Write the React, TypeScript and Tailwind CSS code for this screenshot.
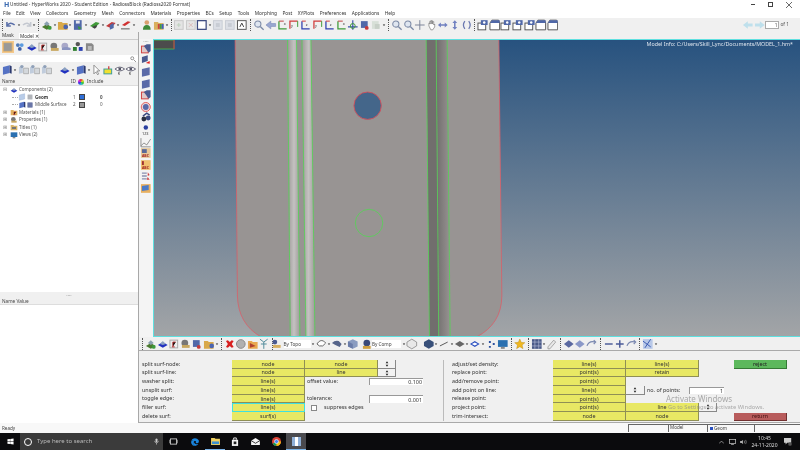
import React from "react";
import { FaWindows, FaEdge } from "react-icons/fa";

const F = "font-['Noto_Sans','Open_Sans',sans-serif]";

function Ico({ k, small, tiny }: { k: string; small?: boolean; tiny?: boolean }) {
  const body: Record<string, React.ReactNode> = {
    undo: <path d="M2 7 Q5 2 10 6 M2 3v4h4" fill="none" stroke="#5a6fa8" strokeWidth="1.6" />,
    redo: <path d="M10 7 Q7 2 2 6 M10 3v4H6" fill="none" stroke="#c4c8d0" strokeWidth="1.6" />,
    compadd: <g><path d="M1 8l5-3 5 3-5 3z" fill="#4b7a2e" /><path d="M3 5l3-3 3 3-3 2z" fill="#8aa0b0" /><circle cx="9" cy="9" r="2" fill="#3c9a3c" /></g>,
    folder: <g><path d="M1 3h4l1 1h5v7H1z" fill="#d9a94a" /><circle cx="9" cy="8" r="2.4" fill="#4b65b0" /></g>,
    save: <g><rect x="2" y="1" width="8" height="10" fill="#5068a8" /><rect x="4" y="1.5" width="4" height="3" fill="#e8e8f0" /><path d="M6 7l4 2-3 2z" fill="#3c9a3c" /></g>,
    gflag: <g><path d="M1 7l6-4 4 1-5 5z" fill="#3f9a38" /><path d="M3 8l3 2 2-2v-2z" fill="#444" /></g>,
    rflag: <g><path d="M1 7l6-4 4 1-5 5z" fill="#c43a3a" /><path d="M5 6l4-2v5l-4 2z" fill="#5068a8" /></g>,
    rline: <g><path d="M2 6l6-4 3 1-6 4z" fill="#d03030" /><path d="M1 10h9" stroke="#555" strokeWidth="1" /></g>,
    person: <g><circle cx="6" cy="3.4" r="2.4" fill="#d9a070" /><path d="M2 11q0-5 4-5t4 5z" fill="#3f8a3a" /></g>,
    color: <g><path d="M1 3h4l1 1h5v7H1z" fill="#d9b060" /><rect x="5" y="5" width="2" height="5" fill="#d04040" /><rect x="7" y="5" width="2" height="5" fill="#40a040" /><rect x="9" y="5" width="2" height="5" fill="#4060c0" /></g>,
    gbox: <g><rect x="1.5" y="1.5" width="9" height="9" fill="#e4e4e4" stroke="#c8c8c8" /><path d="M4 6h4M6 4v4" stroke="#bcd0bc" /></g>,
    rbox: <g><rect x="1.5" y="1.5" width="9" height="9" fill="#e4e4e4" stroke="#c8c8c8" /><path d="M4 4l4 4M8 4l-4 4" stroke="#dcbcbc" /></g>,
    wbox: <rect x="1.5" y="1.5" width="9" height="9" fill="#fff" stroke="#3c4a80" strokeWidth="1.3" />,
    gfit: <g><rect x="1.5" y="1.5" width="9" height="9" fill="#dcdfe6" stroke="#c8ccd4" /><rect x="4" y="4" width="4" height="4" fill="#c8ccd4" /></g>,
    disk: <g><rect x="1.5" y="1.5" width="9" height="9" fill="#fff" stroke="#555" /><path d="M4 8l2-4 2 4" stroke="#444" fill="none" /></g>,
    mag: <g><circle cx="5" cy="5" r="3.2" fill="#dfe6f0" stroke="#7c8aa6" strokeWidth="1.1" /><path d="M7.5 7.5L11 11" stroke="#7c8aa6" strokeWidth="1.4" /></g>,
    diamond: <path d="M1 6l5-4v2.5h5v3H6V10z" fill="#9aa8d0" stroke="#6a7ab0" strokeWidth=".5" />,
    axg: <g><path d="M2 2v8h8" fill="none" stroke="#3f9a38" strokeWidth="1.3" /><path d="M2 2h5" stroke="#c04040" strokeWidth="1" /><text x="7" y="6" fontSize="4" fill="#333">x</text></g>,
    axr: <g><path d="M2 10V2h8" fill="none" stroke="#d03a3a" strokeWidth="1.3" /><path d="M10 2v6" stroke="#3f9a38" strokeWidth="1" /><text x="3" y="8" fontSize="4" fill="#333">y</text></g>,
    axb: <g><path d="M2 2v8h8" fill="none" stroke="#3040b0" strokeWidth="1.3" /><path d="M2 2h4" stroke="#d03a3a" strokeWidth="1" /><text x="6" y="7" fontSize="4" fill="#333">z</text></g>,
    axm: <g><path d="M6 1v10M1 8h10" stroke="#3a50a8" strokeWidth="1.2" /><circle cx="6" cy="7" r="2.5" fill="none" stroke="#3f9a38" /></g>,
    fitr: <g><rect x="2" y="2" width="7" height="7" fill="#5068a8" /><circle cx="8" cy="9" r="2" fill="#c43a3a" /></g>,
    gpage: <g><rect x="2" y="2" width="7" height="8" fill="#d8e0d8" /><rect x="5" y="5" width="5" height="5" fill="#c8d0c8" /></g>,
    cross: <path d="M6 1v10M1 6h10" stroke="#7a8498" strokeWidth="1" />,
    hand: <path d="M3 7V4h1v1V2h1.300v3V1.500h1.300V5V2.500H8V6l1-1v3l-2 3H5z" fill="#fff" stroke="#777" strokeWidth=".7" />,
    lr: <path d="M1 6l3-2.500v1.700h4V3.500L11 6 8 8.500V6.800H4v1.700z" fill="#7080c0" />,
    ud: <path d="M6 1l2.500 3H6.800v4h1.700L6 11 3.500 8h1.700V4H3.500z" fill="#7080c0" />,
    rot: <path d="M4 2Q1 6 4 10M8 2Q11 6 8 10" fill="none" stroke="#6a78b0" strokeWidth="1.300" />,
    view: <g><rect x="1" y="4" width="8" height="7" fill="#fff" stroke="#555" /><rect x="4" y="1" width="7" height="5" fill="#5068a8" /><circle cx="7.500" cy="3.500" r="1.300" fill="#fff" /></g>,
    view2: <g><path d="M1 4l2-3h7l1 3v7H1z" fill="#fff" stroke="#555" /><path d="M1 4h10V1H3z" fill="#5068a8" /></g>,
    la: <path d="M1 6l5-4v2.500h5v3H6V10z" fill="#bfe0ec" />,
    ra: <path d="M11 6L6 2v2.500H1v3h5V10z" fill="#bfe0ec" />,
    models: <g><rect x="1" y="1" width="10" height="10" rx="1" fill="#d8b070" /><rect x="2" y="2" width="8" height="8" fill="#999" /></g>,
    ent: <g><circle cx="4" cy="4" r="2" fill="#4f7ab8" /><circle cx="8" cy="4" r="2" fill="#5a9adf" /><circle cx="6" cy="8" r="2" fill="#4060a8" /></g>,
    comp: <g><path d="M1 7l5-3 5 3-5 3z" fill="#2030c0" /><path d="M3 6l3-3 3 3-3 1z" fill="#8aa0c0" /></g>,
    mat: <g><rect x="2" y="2" width="8" height="8" fill="#eee" stroke="#aaa" /><path d="M5 9V4h3M7 9H4" stroke="#c03a3a" /></g>,
    prop: <g><circle cx="5" cy="5" r="3.500" fill="#777" /><rect x="2" y="7" width="8" height="3" fill="#c8a860" /></g>,
    titl: <g><circle cx="5" cy="5" r="3.500" fill="#a8a8c8" /><path d="M2 7q4-2 9 0v2H2z" fill="#8a94c0" /></g>,
    mix: <g><circle cx="6" cy="3" r="2.300" fill="#555" /><rect x="1" y="6" width="4" height="4" fill="#2f7f2f" /><rect x="7" y="6" width="4" height="4" fill="#2a40b0" /></g>,
    layers: <g><path d="M2 2h6l2 2v6H2z" fill="#888" /><path d="M4 5h4v4H4z" fill="#bbb" /></g>,
    folderm: <g><path d="M1 3h4l1 1h5v7H1z" fill="#e0b060" /><path d="M6 10V6h3M8 10H5" stroke="#b03030" /></g>,
    foldert: <g><path d="M1 3h4l1 1h5v7H1z" fill="#d8b468" /><rect x="3" y="6" width="6" height="3" fill="#777" /></g>,
    sheet: <g><path d="M2 3l7-2v8l-7 2z" fill="#5572c4" /><path d="M9 1l2 1v8l-2-1z" fill="#2c3a70" /></g>,
    sheetl: <path d="M2 3l8-2v8l-8 2z" fill="#b8cce8" stroke="#8aa0c8" strokeWidth=".5" />,
    gridg: <g><rect x="1" y="1" width="10" height="10" fill="#c8ccd4" /><path d="M4 1v10M8 1v10M1 4h10M1 8h10" stroke="#888" strokeWidth=".8" /></g>,
    gridb: <g><rect x="1" y="1" width="10" height="10" fill="#3a4a88" /><path d="M4 1v10M8 1v10M1 4h10M1 8h10" stroke="#c0c8e0" strokeWidth=".8" /></g>,
    sheetg: <g><path d="M1 3l4-1v7l-4 1z" fill="#c0ccdc" /><circle cx="4" cy="2.500" r="1.800" fill="#8fa0b8" /><rect x="6" y="4" width="5" height="6" fill="#d4d8dc" stroke="#888" strokeWidth=".5" /></g>,
    arrow: <path d="M3 1v9l2-2 2 3 1-1-2-3h3z" fill="#fff" stroke="#666" strokeWidth=".7" />,
    yel: <g><rect x="2" y="5" width="8" height="5" fill="#f0e030" stroke="#3a9a9a" /><path d="M7 5V2" stroke="#d03a3a" strokeWidth="1.300" /></g>,
    eye: <g><path d="M1 5q5-4 10 0-5 4-10 0z" fill="#fff" stroke="#667" /><circle cx="6" cy="5" r="1.500" fill="#556" /><text x="4" y="11.500" fontSize="3.500" fill="#333">R</text></g>,
    sbox: <g><rect x="1.500" y="3" width="7" height="7" fill="#e0c8c8" stroke="#d04040" /><path d="M4 3l3-2h4v7l-2 2z" fill="#4a5a90" /></g>,
    sred: <g><path d="M2 3l6-2v6l-6 2z" fill="#4a5a90" /><path d="M6 9l4-2v3z" fill="#e02020" /></g>,
    sblue: <path d="M2 3l8-2v8l-8 2z" fill="#5a6aa8" />,
    circ: <g><circle cx="6" cy="6" r="4.700" fill="#f0d8d8" stroke="#e06060" /><circle cx="6" cy="6" r="3" fill="#5a6aa8" /></g>,
    bino: <g><circle cx="4" cy="7" r="2.500" fill="#2a3040" /><circle cx="8.500" cy="6" r="2.500" fill="#3a4a80" /><path d="M3 4l4-3 3 2" stroke="#3a4a80" strokeWidth="1.500" fill="none" /></g>,
    num: <g><circle cx="6" cy="3.500" r="2.300" fill="#2a40a0" /><text x="2" y="11" fontSize="4" fill="#333">123</text></g>,
    chart: <path d="M1 10l3-3 3 2 4-6M1 2v9h10" fill="none" stroke="#777" strokeWidth=".8" />,
    abc: <g><rect x="1" y="1" width="10" height="10" fill="#e8c898" /><rect x="2" y="2" width="5" height="4" fill="#5a6a98" /><text x="2" y="10" fontSize="3.600" fontWeight="700" fill="#a02020">ABC</text></g>,
    abc2: <g><rect x="1" y="1" width="10" height="10" fill="#f0c070" /><rect x="2" y="2" width="2" height="4" fill="#a03030" /><text x="2" y="10" fontSize="3.600" fontWeight="700" fill="#a02020">ABC</text></g>,
    mv: <g><path d="M2 3h5M2 6h5M2 9h5" stroke="#8a90b0" strokeWidth="1.300" /><path d="M8 2l2 3-2 1zM8 7l2 3H7z" fill="#d04040" /></g>,
    org: <g><rect x="1" y="2" width="10" height="9" fill="#e8b060" /><path d="M2 9l7-1V3L2 4z" fill="#4a7ac8" /></g>,
    red: <path d="M2 3l2-1 2 2 2-2 2 1-2 3 2 3-2 1-2-2-2 2-2-1 2-3z" fill="#d82020" />,
    sph: <circle cx="6" cy="6" r="4.500" fill="#b0b0b0" stroke="#888" />,
    fold2: <g><path d="M1 3h4l1 1h5v7H1z" fill="#e8a850" /><path d="M3 5l6 3-6 2z" fill="#b04030" /></g>,
    ant: <path d="M6 11V4M2 1l4 3 4-3M3 6h6" stroke="#4f8a9a" fill="none" strokeWidth="1" />,
    topo: <g><circle cx="4" cy="4" r="2.500" fill="#4a5a90" /><rect x="2" y="7" width="8" height="3" fill="#d8b060" /></g>,
    ring: <path d="M1 6q3-5 7-3l2 2-3 3Q3 9 1 6z" fill="#fff" stroke="#666" />,
    ell: <path d="M1 5q3-3 7-2l3 3-2 3Q4 7 1 5z" fill="#55648a" />,
    cube: <g><path d="M6 1l5 2.500v5L6 11 1 8.500v-5z" fill="#8a9cc0" /><path d="M6 6v5L1 8.500v-5z" fill="#6a7ca8" /></g>,
    comps: <g><circle cx="6" cy="5" r="3.500" fill="#3a4a7a" /><rect x="2" y="8" width="8" height="3" fill="#d0a040" /></g>,
    cubew: <path d="M6 1l5 3v4l-5 3-5-3V4z" fill="#e8e8e8" stroke="#777" strokeWidth=".7" />,
    cubed: <path d="M6 1l5 3v4l-5 3-5-3V4z" fill="#38507a" />,
    line: <path d="M2 8l8-4" stroke="#555" strokeWidth="1" />,
    dia: <path d="M1 6l5-3 5 3-5 3z" fill="#666" />,
    dias: <g><path d="M1 6l5-3 5 3-5 3z" fill="#2a50c0" /><path d="M3 6l3-1.500L9 6 6 7.500z" fill="#fff" /></g>,
    dots: <path d="M3 3h2v2H3zM7 5h2v2H7zM3 8h2v2H3z" fill="#2a50a0" />,
    mon: <g><rect x="1" y="2" width="10" height="7" fill="#2a70b0" /><rect x="4" y="9" width="4" height="2" fill="#888" /></g>,
    star: <path d="M6 .8l1.500 3.500 3.800.3-2.900 2.500.9 3.700L6 8.800 2.700 10.800l.9-3.700L.7 4.600l3.800-.3z" fill="#f0b820" stroke="#b08010" strokeWidth=".4" />,
    grid: <g><rect x="1" y="1" width="10" height="10" fill="#4a5a88" /><path d="M4 1v10M8 1v10M1 4h10M1 8h10" stroke="#c0c8e0" strokeWidth=".6" /></g>,
    pen: <path d="M2 9l6-7 2 2-6 7H2z" fill="#e8e8e8" stroke="#888" strokeWidth=".7" />,
    dl: <path d="M6 2L1 6l5 4 5-4z" fill="#5a68a0" />,
    dr: <path d="M6 2l5 4-5 4-5-4z" fill="#8a98c8" />,
    curv: <path d="M1 8Q3 2 10 4M8 2l2 2-2 2" fill="none" stroke="#7a88b0" strokeWidth="1.200" />,
    minus: <path d="M2 6h8" stroke="#4a5a98" strokeWidth="1.500" />,
    plus: <path d="M2 6h8M6 2v8" stroke="#4a5a98" strokeWidth="1.500" />,
    net: <g><rect x="1" y="1" width="10" height="10" fill="#b8c8e8" /><path d="M1 3l8 6M9 1L3 10" stroke="#3a5ab0" strokeWidth="1" /></g>,
  };
  const size = tiny ? "w-[6px] h-[6px]" : small ? "w-[8px] h-[8px]" : "w-[11.600px] h-[12px]";
  return (
    <svg viewBox="0 0 12 12" className={`${size} shrink-0`}>
      {body[k]}
    </svg>
  );
}

const Caret = () => (
  <svg viewBox="0 0 4 12" className="w-[4px] h-[12px] shrink-0"><path d="M.8 5.500h2.400L2 7z" fill="#222" /></svg>
);
const Sep = () => (
  <div className="w-[5px] h-[12px] shrink-0 flex justify-center">
    <div className="w-px h-full border-l border-dotted border-[#555]" />
  </div>
);

const spacer: Record<string, string> = {
  "1": "w-[1px] shrink-0",
  "3": "w-[3px] shrink-0",
  "5": "w-[5px] shrink-0",
  "7": "w-[7px] shrink-0",
  "-1": "-ml-[1px]",
  "-4": "-ml-[4px]",
};

function Tools({ items }: { items: string[] }) {
  return (
    <>
      {items.map((s, i) =>
        s === "|" ? <Sep key={i} /> : s === "v" ? <Caret key={i} /> : spacer[s] ? <div key={i} className={spacer[s]} /> : <Ico key={i} k={s} />
      )}
    </>
  );
}

const Btn = ({ t, hi }: { t: string; hi?: boolean }) => (
  <div className={`w-[73px] h-full shrink-0 bg-[#e8e864] border-r border-b border-[#8f8f55] flex items-center justify-center text-[5.400px] text-[#333] ${hi ? "outline outline-1 -outline-offset-1 outline-[#40e0e0]" : ""}`}>{t}</div>
);
const Spin = ({ w = "w-[18px]" }: { w?: string }) => (
  <div className={`${w} h-full shrink-0 bg-[#f2f2f2] border-r border-b border-[#888] flex items-center justify-center`}>
    <svg viewBox="0 0 6 8" className="w-[4px] h-[6px]"><path d="M3 0l2 3H1zM3 8L1 5h4z" fill="#222" /></svg>
  </div>
);
const Lbl = ({ t, w }: { t: string; w: string }) => <div className={`${w} shrink-0 text-[5.400px] text-[#333] whitespace-nowrap leading-none`}>{t}</div>;
const Input = ({ v, w }: { v: string; w: string }) => (
  <div className={`${w} h-[7.500px] shrink-0 bg-white border-t border-l border-[#999] flex items-center justify-end pr-[1px] text-[5.400px] text-[#333]`}>{v}</div>
);
const Row = ({ children }: { children: React.ReactNode }) => <div className="h-[8.700px] flex items-center">{children}</div>;

function Viewport() {
  return (
    <svg viewBox="0 0 646 298" className="w-full h-full block" preserveAspectRatio="none">
      <defs>
        <linearGradient id="bgv" x1="0" y1="0" x2="0" y2="1">
          <stop offset="0" stopColor="#27527f" />
          <stop offset="1" stopColor="#a3a5a7" />
        </linearGradient>
        <linearGradient id="bar" x1="0" y1="0" x2="1" y2="0">
          <stop offset="0" stopColor="#a09c9b" />
          <stop offset=".5" stopColor="#c4c2c1" />
          <stop offset="1" stopColor="#a09c9b" />
        </linearGradient>
        <linearGradient id="shade" x1="0" y1="0" x2="1" y2="0">
          <stop offset="0" stopColor="#716e6d" />
          <stop offset="1" stopColor="#989493" />
        </linearGradient>
      </defs>
      <rect width="646" height="298" fill="url(#bgv)" />
      <path d="M82 0L84.300 257Q85 285 108 298H323Q348 285 348.300 257L345.300 0Z" fill="#989493" />
      <path d="M82 0L84.300 257Q85 285 108 298M323 298Q348 285 348.300 257L345.300 0" fill="none" stroke="#d8606a" strokeWidth=".8" />
      <path d="M135 0h8.500l3 298H137.500Z" fill="url(#bar)" />
      <path d="M149 0h8.500l4 298h-8.700Z" fill="url(#bar)" />
      <path d="M273 0h10l2.300 298H276Z" fill="#716e6d" />
      <path d="M283 0h11l3 298H285.300Z" fill="url(#shade)" />
      <g stroke="#54d454" strokeWidth=".8" fill="none">
        <path d="M134.300 0L137 298M143.300 0L146.700 298M148.700 0L152.700 298M157.700 0L161.700 298M272.700 0L276 298M282.700 0L285.300 298M293.700 0L296.700 298" />
        <circle cx="215.700" cy="184" r="13.700" />
      </g>
      <circle cx="214.300" cy="66.700" r="13.700" fill="#44668a" stroke="#d8505a" strokeWidth=".9" />
      <rect x="0" y="1" width="21" height="9" fill="#4c4c4c" stroke="#4cc04c" strokeWidth=".8" />
      <path d="M21 1v9" stroke="#d03040" strokeWidth="1" />
      <path d="M0 .5H646M0 297.500H646M.5 0V298" stroke="#5fe0e0" strokeWidth="1" />
    </svg>
  );
}

const tree = "h-[7.500px] flex items-center text-[4.500px] text-[#555] whitespace-nowrap";

function Top({ k, t, sign }: { k: string; t: string; sign: string }) {
  return (
    <div className={tree}>
      <span className="w-[7px] text-[5px] text-[#888] leading-none">{sign}</span>
      <Ico k={k} small />
      <span className="ml-[1px]">{t}</span>
    </div>
  );
}
function Child({ k1, k2, t, id, sw, bold }: { k1: string; k2: string; t: string; id: string; sw: string; bold?: boolean }) {
  return (
    <div className={tree}>
      <div className="ml-[9px] w-[6px] border-t border-dotted border-[#aaa]" />
      <Ico k={k1} small />
      <div className="w-[1px]" />
      <Ico k={k2} tiny />
      <span className={`ml-[2px] w-[38px] ${bold ? "font-bold text-[#333]" : ""}`}>{t}</span>
      <span className="w-[6px]">{id}</span>
      <div className={`w-[6px] h-[6px] border border-[#444] ${sw}`} />
      <span className={`ml-[15px] ${bold ? "font-bold" : ""}`}>0</span>
    </div>
  );
}

export default function App() {
  return (
    <div className={`w-[800px] h-[450px] overflow-hidden flex flex-col bg-[#f0f0f0] ${F} relative blur-[0.3px]`}>
      <div className="h-[9px] bg-white flex items-center pl-[4px] shrink-0">
        <span className="text-[7px] font-bold text-[#3a6ab0] leading-none w-[6px]">H</span>
        <span className="text-[4.700px] text-[#333] leading-none whitespace-nowrap">Untitled - HyperWorks 2020 - Student Edition - RadiossBlock (Radioss2020 Format)</span>
        <div className="ml-auto flex items-center pr-[8px] gap-[13px]">
          <div className="w-[4px] h-px bg-[#444]" />
          <div className="w-[5px] h-[5px] border border-[#444]" />
          <svg viewBox="0 0 6 6" className="w-[6px] h-[6px]"><path d="M0 0l6 6M6 0L0 6" stroke="#444" strokeWidth=".8" /></svg>
        </div>
      </div>
      <div className="h-[9px] bg-white flex items-center pl-[3px] gap-[5.400px] text-[4.800px] text-[#333] shrink-0 leading-none">
        {["File","Edit","View","Collectors","Geometry","Mesh","Connectors","Materials","Properties","BCs","Setup","Tools","Morphing","Post","XYPlots","Preferences","Applications","Help"].map((m) => (
          <span key={m}>{m}</span>
        ))}
      </div>
      <div className="h-[14px] flex items-center shrink-0">
        <Tools items={["|","undo","v","redo","v","|","compadd","v","folder","v","save","v","1","gflag","v","rflag","v","rline","v","5","person","1","color","v","|","-1","gbox","rbox","wbox","v","gfit","1","gfit","disk","|","mag","1","diamond","axg","axr","axb","1","axr","axb","axg","axm","fitr","gpage","v","|","mag","mag","cross","hand","lr","ud","rot","|","view","view2","view","view","view","view2","view2"]} />
        <div className="ml-auto flex items-center pr-[11px] text-[4.800px] text-[#555]">
          <Ico k="la" /><Ico k="ra" />
          <div className="w-[14px] h-[8px] bg-white border border-[#aaa] flex items-center justify-end pr-px leading-none">1</div>
          <span className="ml-[1px] whitespace-nowrap">of 1</span>
        </div>
      </div>
      <div className="flex-1 flex min-h-0">
        <div className="w-[139px] shrink-0 flex flex-col border-r border-[#a8a8a8]">
          <div className="h-[7px] flex items-end text-[4.700px] text-[#333] leading-none shrink-0">
            <span className="w-[19px] pl-[2px] pb-[1px]">Mask</span>
            <span className="w-[19px] h-[6px] bg-white pl-[1px] flex items-center whitespace-nowrap">Model ✕</span>
          </div>
          <div className="h-[14px] flex items-center pl-[2px] shrink-0 border-t border-[#ccc]">
            <div className="w-[12px] h-[12px] bg-[#f4c88c] flex items-center justify-center shrink-0"><Ico k="models" /></div>
            <Tools items={["ent","comp","mat","prop","titl","mix","layers"]} />
          </div>
          <div className="h-[2px] shrink-0" />
          <div className="h-[7px] bg-white flex items-center justify-end pr-[2px] shrink-0">
            <svg viewBox="0 0 8 8" className="w-[6px] h-[6px]"><circle cx="3" cy="3" r="2" fill="none" stroke="#777" /><path d="M5 5l3 3" stroke="#777" /></svg>
          </div>
          <div className="h-[16px] flex items-center pl-[1px] shrink-0">
            <Tools items={["sheet","v","1","sheetg","sheetg","sheetg","7","comp","v","sheet","v","arrow","yel","eye","eye"]} />
          </div>
          <div className="h-[8px] flex items-center text-[4.700px] text-[#444] border-b border-[#ddd] shrink-0 leading-none">
            <span className="ml-[2px] w-[69px]">Name</span>
            <span className="w-[5px] mr-[2px]">ID</span>
            <div className="w-[6px] h-[6px] rounded-full bg-[conic-gradient(#e03030,#e0e030,#30c030,#30c0e0,#3030e0,#e030e0,#e03030)]" />
            <span className="ml-[3px]">Include</span>
          </div>
          <div className="h-[206px] bg-white shrink-0 pl-[3px]">
            <Top k="comp" t="Components (2)" sign="⊟" />
            <Child k1="sheetl" k2="gridg" t="Geom" id="1" sw="bg-[#2f6fd8]" bold />
            <Child k1="sheet" k2="gridb" t="Middle Surface" id="2" sw="bg-[#999]" />
            <Top k="folderm" t="Materials (1)" sign="⊞" />
            <Top k="prop" t="Properties (1)" sign="⊞" />
            <Top k="foldert" t="Titles (1)" sign="⊞" />
            <Top k="mon" t="Views (2)" sign="⊞" />
          </div>
          <div className="h-[7px] flex items-center justify-center shrink-0 text-[5px] text-[#666] leading-none">····</div>
          <div className="h-[6px] flex items-center text-[4.700px] text-[#444] pl-[2px] border-b border-[#ddd] shrink-0 leading-none">Name Value</div>
          <div className="flex-1 bg-white" />
        </div>
        <div className="flex-1 flex flex-col min-w-0">
          <div className="h-[298px] flex shrink-0 mt-[7px]">
            <div className="w-[14px] shrink-0 flex flex-col items-center bg-[#f4f4f4]">
              <div className="h-[4px] text-[5px] leading-none text-[#666]">····</div>
              {["sbox","sred","sblue","sblue","sbox","circ","bino","num","chart","abc","abc2","mv","org"].map((k, i) => (
                <div key={i} className="h-[11.600px] flex items-center shrink-0"><Ico k={k} /></div>
              ))}
            </div>
            <div className="flex-1 relative">
              <Viewport />
              <div className="absolute top-[1px] right-[7px] text-[5.350px] text-[#dfe6ee] leading-[8px] whitespace-nowrap">Model Info: C:/Users/Skill_Lync/Documents/MODEL_1.hm*</div>
            </div>
          </div>
          <div className="h-[14px] flex items-center pl-[1px] shrink-0 border-b border-[#aaa]">
            <Tools items={["|","compadd","comp","mat","prop","fitr","folder","v","|","red","sph","fold2","ant","|","-4","topo"]} />
            <span className="text-[4.700px] text-[#444] w-[27px] ml-[1px] whitespace-nowrap bg-white leading-[8px] h-[8px]">By Topo</span>
            <Caret />
            <Tools items={["1","ring","v","ell","v","cube","3","comps"]} />
            <span className="text-[4.700px] text-[#444] w-[29px] -ml-[1px] whitespace-nowrap bg-white leading-[8px] h-[8px]">By Comp</span>
            <Tools items={["1","v","cubew","5","cubed","v","line","v","dia","v","dias","v","1","dots","mon","|","star","|","grid","v","pen","|","dl","dr","curv","|","minus","plus","curv","|","net","v"]} />
          </div>
          <div className="flex-1 flex pl-[3px] pt-[9px] border-b border-[#aaa] min-h-0">
            <div className="flex flex-col w-[301px] shrink-0 h-[61px]">
              <Row><Lbl t="split surf-node:" w="w-[90px]" /><Btn t="node" /><Btn t="node" /><Spin /></Row>
              <Row><Lbl t="split surf-line:" w="w-[90px]" /><Btn t="node" /><Btn t="line" /><Spin /></Row>
              <Row><Lbl t="washer split:" w="w-[90px]" /><Btn t="line(s)" /><Lbl t="offset value:" w="w-[64px] pl-[2px]" /><Input v="0.100" w="w-[54px]" /></Row>
              <Row><Lbl t="unsplit surf:" w="w-[90px]" /><Btn t="line(s)" /></Row>
              <Row><Lbl t="toggle edge:" w="w-[90px]" /><Btn t="line(s)" /><Lbl t="tolerance:" w="w-[64px] pl-[2px]" /><Input v="0.001" w="w-[54px]" /></Row>
              <Row><Lbl t="filler surf:" w="w-[90px]" /><Btn t="line(s)" hi /><div className="ml-[6px] w-[6px] h-[6px] bg-white border border-[#888]" /><Lbl t="suppress edges" w="ml-[7px] w-[60px]" /></Row>
              <Row><Lbl t="delete surf:" w="w-[90px]" /><Btn t="surf(s)" /></Row>
            </div>
            <div className="flex flex-col pl-[8px] relative flex-1 h-[61px] border-l border-[#bbb]">
              <Row><Lbl t="adjust/set density:" w="w-[101px]" /><Btn t="line(s)" /><Btn t="line(s)" /></Row>
              <Row><Lbl t="replace point:" w="w-[101px]" /><Btn t="point(s)" /><Btn t="retain" /></Row>
              <Row><Lbl t="add/remove point:" w="w-[101px]" /><Btn t="point(s)" /></Row>
              <Row><Lbl t="add point on line:" w="w-[101px]" /><Btn t="line(s)" /><Spin w="w-[19px]" /><Lbl t="no. of points:" w="w-[44px] pl-[2px]" /><Input v="1" w="w-[35px]" /></Row>
              <Row><Lbl t="release point:" w="w-[101px]" /><Btn t="point(s)" /></Row>
              <Row><Lbl t="project point:" w="w-[101px]" /><Btn t="point(s)" /><Btn t="line" /><Spin /></Row>
              <Row><Lbl t="trim-intersect:" w="w-[101px]" /><Btn t="node" /><Btn t="node" /></Row>
              <div className="absolute left-[290px] top-0 w-[53px] h-[9px] bg-[#5cb85c] border-r border-b border-[#357a35] flex items-center justify-center text-[5.400px] text-[#222]">reject</div>
              <div className="absolute left-[290px] top-[53px] w-[53px] h-[8px] bg-[#b85c5c] border-r border-b border-[#703030] flex items-center justify-center text-[5.400px] text-[#401010]">return</div>
              <div className="absolute left-[222px] top-[35px] text-[8px] text-[#8a8a8a]/70 whitespace-nowrap leading-none">Activate Windows</div>
              <div className="absolute left-[224px] top-[45px] text-[5.800px] text-[#8a8a8a]/70 whitespace-nowrap leading-none">Go to Settings to activate Windows.</div>
            </div>
          </div>
        </div>
      </div>
      <div className="h-[10px] flex items-center text-[4.600px] text-[#444] pl-[2px] shrink-0 leading-none bg-[#f8f8f8]">
        <span className="w-[626px]">Ready</span>
        <div className="w-[40px] h-[8px] border-t border-l border-[#666]" />
        <div className="w-[39px] h-[8px] border-t border-l border-[#666] pl-[1px]">Model</div>
        <div className="w-[47px] h-[8px] border-t border-l border-[#666] flex items-center pl-[2px]"><div className="w-[3px] h-[3px] bg-[#2a50c0] mr-[1px]" />Geom</div>
        <div className="flex-1 h-[8px] border-t border-l border-[#666]" />
      </div>
      <div className="h-[17px] bg-[#0b0b0d] flex items-center shrink-0 text-white">
        <div className="w-[20px] flex justify-center"><FaWindows className="w-[7px] h-[7px] text-white" /></div>
        <div className="w-[143px] h-full bg-[#3b3b3b] flex items-center pl-[4px]">
          <div className="w-[8px] h-[8px] rounded-full border border-white" />
          <span className="ml-[5px] text-[6px] text-[#bbb] whitespace-nowrap">Type here to search</span>
          <svg viewBox="0 0 8 10" className="ml-auto mr-[4px] w-[5px] h-[7px]"><rect x="2.500" y="0" width="3" height="6" rx="1.500" fill="#ccc" /><path d="M1 4q0 3 3 3t3-3M4 7v3" fill="none" stroke="#ccc" /></svg>
        </div>
        <div className="w-[21px] flex justify-center"><svg viewBox="0 0 10 8" className="w-[9px] h-[7px]"><rect x="1.500" y="1" width="7" height="6" fill="none" stroke="#ccc" /><path d="M0 2v4M10 2v4" stroke="#ccc" /></svg></div>
        <div className="w-[21px] flex justify-center"><FaEdge className="w-[8px] h-[8px] text-[#1a86e0]" /></div>
        <div className="w-[20px] h-full flex justify-center items-center border-b border-[#7ab4e8]"><svg viewBox="0 0 10 9" className="w-[9px] h-[8px]"><path d="M0 1h4l1 1h5v7H0z" fill="#f0d060" /><rect x="1" y="5" width="8" height="3" fill="#3a90d0" /></svg></div>
        <div className="w-[20px] flex justify-center"><svg viewBox="0 0 9 10" className="w-[8px] h-[9px]"><path d="M1 3h7v7H1z" fill="#f4f4f4" /><path d="M3 3V1h3v2" fill="none" stroke="#f4f4f4" /><rect x="3" y="5" width="3" height="3" fill="#222" /></svg></div>
        <div className="w-[21px] flex justify-center"><svg viewBox="0 0 10 8" className="w-[9px] h-[7px]"><path d="M0 3l5-3 5 3v5H0z" fill="#f4f4f4" /><path d="M0 3l5 3 5-3" fill="none" stroke="#222" /></svg></div>
        <div className="w-[20px] flex justify-center"><svg viewBox="0 0 10 10" className="w-[9px] h-[9px]"><circle cx="5" cy="5" r="5" fill="#db4437" /><path d="M5 5L.7 7.500A5 5 0 0 0 5 10z" fill="#0f9d58" /><path d="M5 5v5a5 5 0 0 0 5-5z" fill="#f4c20d" /><circle cx="5" cy="5" r="2.200" fill="#4285f4" stroke="#fff" strokeWidth=".7" /></svg></div>
        <div className="w-[20px] h-full bg-[#4a4a4e] flex justify-center items-center border-b border-[#7ab4e8]"><div className="w-[9px] h-[9px] bg-[#8fb0d8] flex justify-center"><div className="w-[3px] h-full bg-white" /></div></div>
        <div className="ml-auto flex items-center">
          <svg viewBox="0 0 8 5" className="w-[5px] h-[4px]"><path d="M0 5l4-4 4 4" fill="none" stroke="#ccc" /></svg>
          <svg viewBox="0 0 10 8" className="ml-[5px] w-[7px] h-[6px]"><rect x=".5" y=".5" width="9" height="5.500" fill="none" stroke="#ccc" /><path d="M3 7.500h4" stroke="#ccc" /></svg>
          <svg viewBox="0 0 10 8" className="ml-[4px] w-[7px] h-[6px]"><path d="M0 3h2l2-2v6L2 5H0z" fill="#ccc" /><path d="M6 2q1 2 0 4M8 1q2 3 0 6" fill="none" stroke="#ccc" strokeWidth=".7" /></svg>
          <div className="ml-[4px] w-[27px] text-[5px] leading-[7px] text-center text-[#ddd] whitespace-nowrap">10:45<br />24-11-2020</div>
          <svg viewBox="0 0 10 10" className="ml-[6px] mr-[8px] w-[8px] h-[8px]"><path d="M0 0h9v6H4L2 8V6H0z" fill="#ccc" /><circle cx="7.500" cy="7.500" r="2.300" fill="#555" /></svg>
        </div>
      </div>
    </div>
  );
}
